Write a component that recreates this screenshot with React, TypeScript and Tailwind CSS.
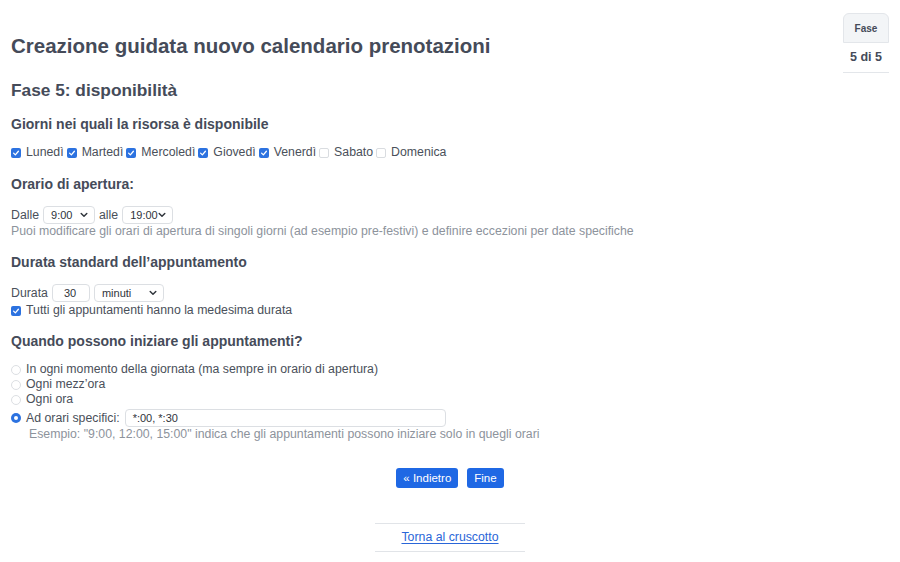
import { ReactNode } from 'react';

const Check = ({ on }: { on: boolean }) =>
  on ? (
    <span className="inline-flex w-[10px] h-[10px] rounded-[2px] bg-[#2c72e0] items-center justify-center shrink-0">
      <svg viewBox="0 0 10 10" className="w-[8px] h-[8px]">
        <path d="M2 5.2 L4.2 7.3 L8 2.8" fill="none" stroke="#fff" strokeWidth="1.6" strokeLinecap="round" strokeLinejoin="round" />
      </svg>
    </span>
  ) : (
    <span className="inline-block w-[10px] h-[10px] rounded-[2px] border border-[#d9dce0] bg-white shrink-0" />
  );

const Radio = ({ on }: { on?: boolean }) =>
  on ? (
    <span className="inline-flex w-[10px] h-[10px] rounded-full bg-[#2c72e0] items-center justify-center shrink-0">
      <span className="w-[4px] h-[4px] rounded-full bg-white" />
    </span>
  ) : (
    <span className="inline-block w-[10px] h-[10px] rounded-full border border-[#dcdfe3] bg-white shrink-0" />
  );

const Select = ({ value, w }: { value: string; w: string }) => (
  <span className={`inline-flex items-center justify-between h-[18px] ${w} pl-[7px] pr-[6px] border border-[#dcdfe3] rounded-[4px] bg-white text-[11px] text-[#2f343b]`}>
    {value}
    <svg viewBox="0 0 10 10" className="w-[8px] h-[8px]">
      <path d="M1.5 3.2 L5 6.7 L8.5 3.2" fill="none" stroke="#2f343b" strokeWidth="1.8" strokeLinecap="round" strokeLinejoin="round" />
    </svg>
  </span>
);

const H3 = ({ children, className = '' }: { children: ReactNode; className?: string }) => (
  <h3 className={`text-[14px] leading-[18px] font-bold text-[#454b59] ${className}`}>{children}</h3>
);

const days: [string, boolean][] = [
  ['Lunedì', true],
  ['Martedì', true],
  ['Mercoledì', true],
  ['Giovedì', true],
  ['Venerdì', true],
  ['Sabato', false],
  ['Domenica', false],
];

export default function App() {
  return (
    <div className="min-h-screen bg-white px-[11px] pt-[13px] font-['Liberation_Sans',Arial,sans-serif] text-[12.3px] leading-[15px] text-[#4a505a]">
      <div className="flex items-start justify-between">
        <h1 className="mt-[20px] text-[20.5px] leading-[26px] font-bold text-[#454b59]">
          Creazione guidata nuovo calendario prenotazioni
        </h1>
        <div className="w-[46px] text-center text-[#454b59] font-bold">
          <div className="h-[30px] flex items-center justify-center bg-[#f3f5f7] border border-[#e3e6ea] rounded-t-[6px] text-[10px]">
            Fase
          </div>
          <div className="h-[30px] flex items-center justify-center border-b border-[#e3e6ea] text-[12.5px]">
            5 di 5
          </div>
        </div>
      </div>

      <h2 className="mt-[6px] text-[17.3px] leading-[22px] font-bold text-[#454b59]">Fase 5: disponibilità</h2>

      <H3 className="mt-[14px]">Giorni nei quali la risorsa è disponibile</H3>
      <div className="mt-[12px] flex items-center gap-[3px]">
        {days.map(([d, on]) => (
          <label key={d} className="inline-flex items-center gap-[5px]">
            <Check on={on} />
            {d}
          </label>
        ))}
      </div>

      <H3 className="mt-[15px]">Orario di apertura:</H3>
      <div className="mt-[13px] flex items-center gap-[4px]">
        Dalle
        <Select value="9:00" w="w-[52px]" />
        alle
        <Select value="19:00" w="w-[51px]" />
      </div>
      <p className="text-[#8d939c]">
        Puoi modificare gli orari di apertura di singoli giorni (ad esempio pre-festivi) e definire eccezioni per date specifiche
      </p>

      <H3 className="mt-[14px]">Durata standard dell’appuntamento</H3>
      <div className="mt-[13px] flex items-center gap-[4px]">
        Durata
        <span className="inline-flex items-center h-[18px] w-[38px] pl-[11px] border border-[#dcdfe3] rounded-[4px] bg-white text-[11px] text-[#2f343b]">
          30
        </span>
        <Select value="minuti" w="w-[70px]" />
      </div>
      <label className="mt-[1px] flex items-center gap-[5px]">
        <Check on />
        Tutti gli appuntamenti hanno la medesima durata
      </label>

      <H3 className="mt-[14px]">Quando possono iniziare gli appuntamenti?</H3>
      <div className="mt-[12px]">
        <label className="flex items-center gap-[5px]">
          <Radio />
          In ogni momento della giornata (ma sempre in orario di apertura)
        </label>
        <label className="flex items-center gap-[5px]">
          <Radio />
          Ogni mezz’ora
        </label>
        <label className="flex items-center gap-[5px]">
          <Radio />
          Ogni ora
        </label>
        <label className="mt-[2px] flex items-center gap-[5px]">
          <Radio on />
          Ad orari specifici:
          <span className="inline-flex items-center h-[18px] w-[321px] pl-[7px] border border-[#dcdfe3] rounded-[4px] bg-white text-[11px] text-[#2f343b]">
            *:00, *:30
          </span>
        </label>
        <p className="ml-[18px] text-[#8d939c]">
          Esempio: "9:00, 12:00, 15:00" indica che gli appuntamenti possono iniziare solo in quegli orari
        </p>
      </div>

      <div className="mt-[26px] flex justify-center gap-[9px]">
        <button className="h-[20px] px-[7px] rounded-[3px] bg-[#1f68e4] text-white text-[11.5px]">
          « Indietro
        </button>
        <button className="h-[20px] px-[7px] rounded-[3px] bg-[#1f68e4] text-white text-[11.5px]">Fine</button>
      </div>

      <div className="mt-[35px] mx-auto w-[150px] border-y border-[#e1e4e8] py-[6px] text-center">
        <a href="#" className="text-[#2a66d8] underline underline-offset-2">
          Torna al cruscotto
        </a>
      </div>
    </div>
  );
}
